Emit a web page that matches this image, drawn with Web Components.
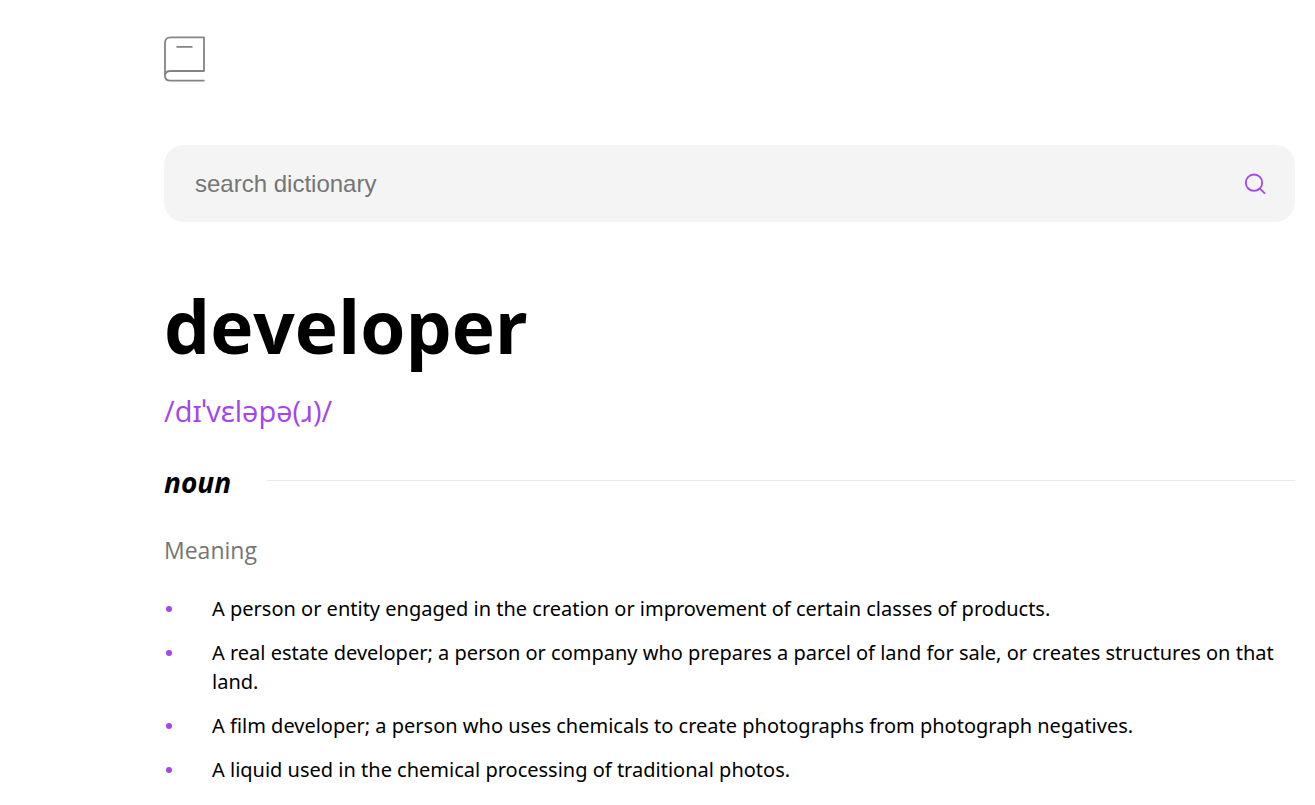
<!DOCTYPE html>
<html lang="en">
<head>
<meta charset="utf-8">
<title>Dictionary</title>
<style>
body { margin: 0; background: #fff; color: #000; font-family: "Open Sans", "Noto Sans", sans-serif; }
</style>
</head>
<body>
<dictionary-app></dictionary-app>

<template id="app-template">
<style>
:host { display: block; padding: 32px 20px 24px 164px; }
header { margin-bottom: 60px; }
book-logo { display: block; }
</style>
<header><book-logo></book-logo></header>
<main>
<search-box></search-box>
<word-heading><span slot="word">developer</span><span slot="phonetic">/dɪˈvɛləpə(ɹ)/</span></word-heading>
<word-meaning>
<span slot="part">noun</span>
<meaning-item>A person or entity engaged in the creation or improvement of certain classes of products.</meaning-item>
<meaning-item>A real estate developer; a person or company who prepares a parcel of land for sale, or creates structures on that land.</meaning-item>
<meaning-item>A film developer; a person who uses chemicals to create photographs from photograph negatives.</meaning-item>
<meaning-item>A liquid used in the chemical processing of traditional photos.</meaning-item>
</word-meaning>
</main>
</template>

<template id="logo-template">
<style>
:host { display: block; }
svg { display: block; }
</style>
<svg width="42" height="53" viewBox="0 0 42 53" fill="none" stroke="#838383" stroke-width="1.8" stroke-linejoin="round" aria-hidden="true">
<path d="M1 44V11Q1 5.3 6.5 5.3H40V39H6.5Q1 39 1 44Q1 48.7 6.5 48.7H40.5M12.5 14.8H28.5"/>
</svg>
</template>

<template id="search-template">
<style>
:host { display: block; }
form { display: flex; align-items: center; height: 77px; padding: 0 29px 0 31px; border-radius: 20px; background: #f4f4f4; box-sizing: border-box; }
input { flex: 1; min-width: 0; padding: 0; border: 0; outline: 0; background: transparent; font: 24px "Liberation Sans", Arial, sans-serif; color: #000; }
input::placeholder { color: #757575; opacity: 1; }
button { padding: 0; border: 0; background: none; }
svg { display: block; }
</style>
<form>
<input type="text" placeholder="search dictionary" aria-label="search dictionary">
<button type="button" aria-label="Search"><svg width="22" height="22" viewBox="0 0 22 22" fill="none" stroke="#a445ed" stroke-width="1.8"><circle cx="10" cy="9.7" r="8.2"/><path d="M15.6 15.3L21 20.6"/></svg></button>
</form>
</template>

<template id="heading-template">
<style>
:host { display: block; margin-top: 52px; }
h1 { margin: 0; font-size: 73px; line-height: 104px; font-weight: 700; }
p { margin: 13px 0 0; font-size: 29px; line-height: 40px; color: #a445ed; }
</style>
<h1><slot name="word"></slot></h1>
<p><slot name="phonetic"></slot></p>
</template>

<template id="meaning-template">
<style>
:host { display: block; margin-top: 27px; }
header { display: flex; align-items: center; gap: 36px; }
h2 { margin: 0; padding-top: 4px; font-size: 28px; line-height: 40px; font-style: italic; }
hr { flex: 1; margin: 0; border: 0; height: 1px; background: #e9e9e9; }
h3 { margin: 32px 0 28px; font-size: 23px; line-height: 32px; font-weight: 400; color: #757575; }
div { display: grid; gap: 15px; }
</style>
<header><h2><slot name="part"></slot></h2><hr></header>
<h3>Meaning</h3>
<div role="list"><slot></slot></div>
</template>

<template id="item-template">
<style>
:host { display: grid; grid-template-columns: 48px 1fr; font-family: "Noto Sans", sans-serif; font-size: 20px; line-height: 29px; }
i { width: 6px; height: 6px; margin: 12px 0 0 2px; border-radius: 50%; background: #a445ed; }
</style>
<i></i><span><slot></slot></span>
</template>

<script>
const define = (name, templateId, role) => customElements.define(name, class extends HTMLElement {
  constructor() {
    super();
    this.attachShadow({ mode: "open" }).append(document.getElementById(templateId).content.cloneNode(true));
  }
  connectedCallback() { if (role) this.setAttribute("role", role); }
});
define("book-logo", "logo-template");
define("search-box", "search-template");
define("word-heading", "heading-template");
define("meaning-item", "item-template", "listitem");
define("word-meaning", "meaning-template");
define("dictionary-app", "app-template");
</script>
</body>
</html>
